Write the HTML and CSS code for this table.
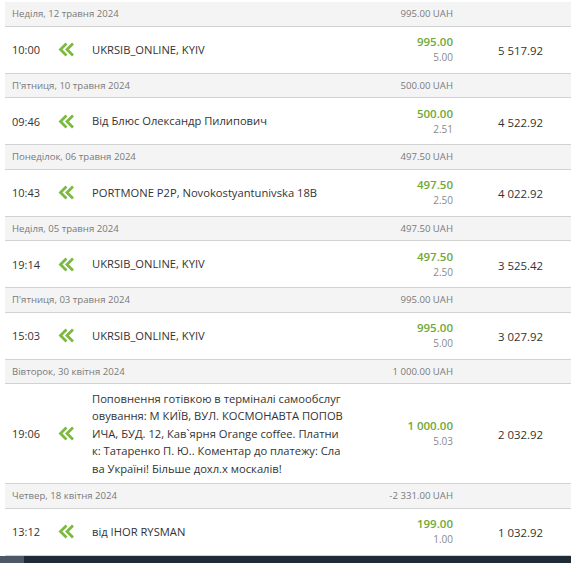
FILE: index.html
```html
<!DOCTYPE html>
<html lang="uk">
<head>
<meta charset="utf-8">
<title>Виписка</title>
<link rel="stylesheet" href="styles.css">
</head>
<body>
<div class="page">
  <div class="list">
    <div class="day">
      <div class="day-date">Неділя, 12 травня 2024</div>
      <div class="day-sum">995.00 UAH</div>
    </div>
    <div class="tx">
      <div class="tx-time">10:00</div>
      <div class="tx-icon"><svg viewBox="0 0 17 15" width="17" height="15"><path d="M8.5 1.5 L2.5 7.5 L8.5 13.5 M15 1.5 L9 7.5 L15 13.5" fill="none" stroke="#7cb940" stroke-width="2.8"/></svg></div>
      <div class="tx-desc">UKRSIB_ONLINE, KYIV</div>
      <div class="tx-amount"><span class="amt">995.00</span><span class="fee">5.00</span></div>
      <div class="tx-balance">5 517.92</div>
    </div>

    <div class="day">
      <div class="day-date">П'ятниця, 10 травня 2024</div>
      <div class="day-sum">500.00 UAH</div>
    </div>
    <div class="tx">
      <div class="tx-time">09:46</div>
      <div class="tx-icon"><svg viewBox="0 0 17 15" width="17" height="15"><path d="M8.5 1.5 L2.5 7.5 L8.5 13.5 M15 1.5 L9 7.5 L15 13.5" fill="none" stroke="#7cb940" stroke-width="2.8"/></svg></div>
      <div class="tx-desc">Від Блюс Олександр Пилипович</div>
      <div class="tx-amount"><span class="amt">500.00</span><span class="fee">2.51</span></div>
      <div class="tx-balance">4 522.92</div>
    </div>

    <div class="day">
      <div class="day-date">Понеділок, 06 травня 2024</div>
      <div class="day-sum">497.50 UAH</div>
    </div>
    <div class="tx">
      <div class="tx-time">10:43</div>
      <div class="tx-icon"><svg viewBox="0 0 17 15" width="17" height="15"><path d="M8.5 1.5 L2.5 7.5 L8.5 13.5 M15 1.5 L9 7.5 L15 13.5" fill="none" stroke="#7cb940" stroke-width="2.8"/></svg></div>
      <div class="tx-desc">PORTMONE P2P, Novokostyantunivska 18B</div>
      <div class="tx-amount"><span class="amt">497.50</span><span class="fee">2.50</span></div>
      <div class="tx-balance">4 022.92</div>
    </div>

    <div class="day">
      <div class="day-date">Неділя, 05 травня 2024</div>
      <div class="day-sum">497.50 UAH</div>
    </div>
    <div class="tx">
      <div class="tx-time">19:14</div>
      <div class="tx-icon"><svg viewBox="0 0 17 15" width="17" height="15"><path d="M8.5 1.5 L2.5 7.5 L8.5 13.5 M15 1.5 L9 7.5 L15 13.5" fill="none" stroke="#7cb940" stroke-width="2.8"/></svg></div>
      <div class="tx-desc">UKRSIB_ONLINE, KYIV</div>
      <div class="tx-amount"><span class="amt">497.50</span><span class="fee">2.50</span></div>
      <div class="tx-balance">3 525.42</div>
    </div>

    <div class="day">
      <div class="day-date">П'ятниця, 03 травня 2024</div>
      <div class="day-sum">995.00 UAH</div>
    </div>
    <div class="tx">
      <div class="tx-time">15:03</div>
      <div class="tx-icon"><svg viewBox="0 0 17 15" width="17" height="15"><path d="M8.5 1.5 L2.5 7.5 L8.5 13.5 M15 1.5 L9 7.5 L15 13.5" fill="none" stroke="#7cb940" stroke-width="2.8"/></svg></div>
      <div class="tx-desc">UKRSIB_ONLINE, KYIV</div>
      <div class="tx-amount"><span class="amt">995.00</span><span class="fee">5.00</span></div>
      <div class="tx-balance">3 027.92</div>
    </div>

    <div class="day">
      <div class="day-date">Вівторок, 30 квітня 2024</div>
      <div class="day-sum">1 000.00 UAH</div>
    </div>
    <div class="tx tx-tall">
      <div class="tx-time">19:06</div>
      <div class="tx-icon"><svg viewBox="0 0 17 15" width="17" height="15"><path d="M8.5 1.5 L2.5 7.5 L8.5 13.5 M15 1.5 L9 7.5 L15 13.5" fill="none" stroke="#7cb940" stroke-width="2.8"/></svg></div>
      <div class="tx-desc tx-desc-wrap">Поповнення готівкою в терміналі самообслуг<br>овування: М КИЇВ, ВУЛ. КОСМОНАВТА ПОПОВ<br>ИЧА, БУД. 12, Кав`ярня Orange coffee. Платни<br>к: Татаренко П. Ю.. Коментар до платежу: Сла<br>ва Україні! Більше дохл.х москалів!</div>
      <div class="tx-amount"><span class="amt">1 000.00</span><span class="fee">5.03</span></div>
      <div class="tx-balance">2 032.92</div>
    </div>

    <div class="day">
      <div class="day-date">Четвер, 18 квітня 2024</div>
      <div class="day-sum">-2 331.00 UAH</div>
    </div>
    <div class="tx">
      <div class="tx-time">13:12</div>
      <div class="tx-icon"><svg viewBox="0 0 17 15" width="17" height="15"><path d="M8.5 1.5 L2.5 7.5 L8.5 13.5 M15 1.5 L9 7.5 L15 13.5" fill="none" stroke="#7cb940" stroke-width="2.8"/></svg></div>
      <div class="tx-desc">від IHOR RYSMAN</div>
      <div class="tx-amount"><span class="amt">199.00</span><span class="fee">1.00</span></div>
      <div class="tx-balance">1 032.92</div>
    </div>
  </div>
  <div class="taskbar"><div class="taskbar-start"></div></div>
</div>
</body>
</html>
```

FILE: styles.css
```css
html, body {
  margin: 0;
  padding: 0;
  background: #ffffff;
}

body {
  font-family: "Open Sans", "Noto Sans", sans-serif;
  color: #333333;
  overflow: hidden;
}

.page {
  height: 563px;
  display: flex;
  flex-direction: column;
}

.list {
  flex: 1;
  margin-left: 5px;
  padding-top: 2px;
  overflow: hidden;
}

.day,
.tx {
  display: grid;
  grid-template-columns: 52px 35px 258px 113px 1fr;
  align-items: center;
}

.day {
  height: 23.5px;
  background: #f4f4f4;
  border-bottom: 1px solid #d2d2d2;
  font-size: 9.6px;
  color: #7a7a7a;
}

.day-date {
  grid-column: 1 / 4;
  padding-left: 7px;
}

.day-sum {
  grid-column: 4;
  text-align: right;
  padding-right: 10px;
}

.tx {
  min-height: 46px;
  border-bottom: 1px solid #d2d2d2;
  font-size: 11.4px;
}

.tx-tall {
  padding: 6px 0;
}

.tx-time {
  padding-left: 7px;
  font-size: 11px;
}

.tx-icon {
  display: flex;
  align-items: center;
  padding-left: 1px;
}

.tx-icon svg {
  display: block;
}

.tx-desc {
  font-size: 11.2px;
  line-height: 17.4px;
}

.tx-desc-wrap {
  white-space: nowrap;
}

.tx-amount {
  display: flex;
  flex-direction: column;
  align-items: flex-end;
  padding-right: 10px;
  padding-top: 1px;
}

.amt {
  font-weight: 600;
  color: #6fa93a;
  font-size: 11.5px;
  line-height: 15px;
}

.fee {
  color: #8a8a8a;
  font-size: 10px;
  line-height: 17px;
}

.tx-balance {
  text-align: right;
  padding-right: 28px;
  padding-top: 2px;
}

.taskbar {
  height: 7px;
  background: #1f2c38;
  display: flex;
}

.taskbar-start {
  width: 24px;
  background: #4c5863;
}
```
